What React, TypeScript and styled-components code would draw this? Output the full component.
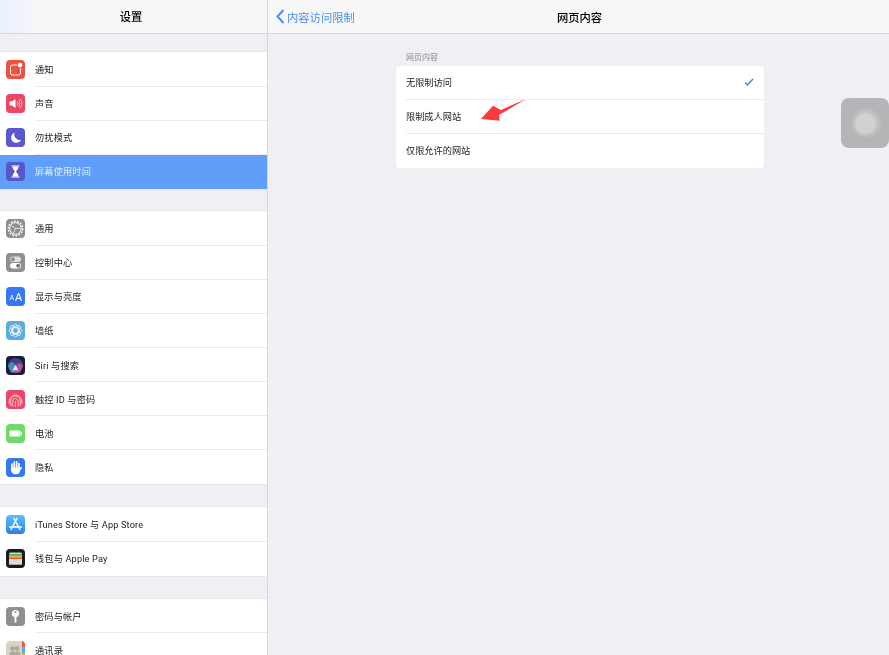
import React from "react";
import styled, { createGlobalStyle } from "styled-components";

const Global = createGlobalStyle`
  html, body { margin: 0; padding: 0; background: #efeff4; overflow: hidden; }
  body { font-family: Roboto, "Noto Sans CJK SC", sans-serif; }
`;
const Page = styled.div`display: flex; width: 889px; height: 655px; overflow: hidden; position: relative; background: #efeff4; filter: blur(.25px);`;
const Sidebar = styled.aside`width: 268px; box-sizing: border-box; flex: none; height: 655px; overflow: hidden; border-right: 1px solid #d9d9dc; background: #efeff4;`;
const NavBar = styled.header`height: 34px; box-sizing: border-box; border-bottom: 1px solid #d8d8da; background: #f7f7f8; display: flex; align-items: center; justify-content: center; position: relative; font-size: 11.3px; color: #000; font-weight: 500; flex: none; padding-left: 2px;`;
const SideNav = styled(NavBar)`padding: 0 5px 1px 0; background: linear-gradient(90deg, #e8f1fc 0, #eef4fb 18px, #f7f7f8 42px);`;
const Group = styled.div<{ $top: number }>`margin-top: ${p => p.$top}px; background: #fff; box-shadow: 0 -1px 0 #e6e6e8, 0 1px 0 #e6e6e8;`;
const Row = styled.div<{ $active?: boolean }>`height: 34.14px; box-sizing: border-box; display: flex; align-items: center; padding-left: 6px; gap: 10px; font-size: 9.2px; letter-spacing: .15px; background: ${p => p.$active ? "#5f9ffb" : "#fff"}; color: ${p => p.$active ? "#dceaff" : "#222"}; position: relative;
  &:not(:last-child)::after { content: ""; display: ${p => p.$active ? "none" : "block"}; position: absolute; left: 35px; right: 0; bottom: 0; height: 1px; background: #ebebed; }
`;
const RowLabel = styled.span`padding-bottom: 1px;`;
const IconTile = styled.span<{ $bg: string }>`width: 19px; height: 19px; border-radius: 4px; background: ${p => p.$bg}; flex: none; display: block; overflow: hidden;`;
const Glyph = styled.svg`width: 19px; height: 19px; display: block;`;
const Main = styled.main`flex: 1; min-width: 0; display: flex; flex-direction: column;`;
const BackLink = styled.div`position: absolute; left: 8px; top: 0; height: 33px; display: flex; align-items: center; gap: 2px; font-size: 11.3px; font-weight: 400; color: #4d8df6;`;
const Content = styled.div`padding: 17.5px 125px 0 128px; position: relative;`;
const SectionLabel = styled.div`font-size: 8px; color: #8a8a8e; padding-left: 10px; height: 14px; line-height: 11px;`;
const Card = styled.div`background: #fff; border-radius: 4px; overflow: hidden;`;
const Option = styled.div`height: 34px; box-sizing: border-box; display: flex; align-items: center; justify-content: space-between; margin-left: 10px; padding: 0 10px 1px 0; font-size: 9.2px; color: #222; border-bottom: 1px solid #ebebed; &:last-child { border-bottom: 0; }`;
const Arrow = styled.svg`position: absolute; left: 481px; top: 98px; width: 47px; height: 24px;`;
const AssistiveTouch = styled.div`position: absolute; left: 841px; top: 98px; width: 48px; height: 50px; box-sizing: border-box; padding-left: 1px; border-radius: 8px; background: #b5b5b8; display: flex; align-items: center; justify-content: center;`;
const Ring = styled.div`width: 30px; height: 30px; border-radius: 50%; background: #bbbbbe; display: flex; align-items: center; justify-content: center;`;
const RingInner = styled.div`width: 26px; height: 26px; border-radius: 50%; background: #c2c2c4; display: flex; align-items: center; justify-content: center;`;
const Dot = styled.div`width: 21px; height: 21px; border-radius: 50%; background: #d1d1d2;`;

const W = "#fff";
const icons: Record<string, [string, React.ReactNode]> = {
  bell: ["#ee5140", <><rect x="4.5" y="5" width="10" height="10" rx="2" fill="none" stroke={W} strokeWidth="1"/><circle cx="14" cy="5" r="3.2" fill="#ee5140"/><circle cx="14" cy="5" r="2.3" fill={W}/></>],
  sound: ["#ee4562", <><path d="M3.5 7.5h2.5L9.5 5v9L6 11.5H3.5z" fill={W}/><path d="M11 7.5a3 3 0 010 4M12.5 6a5 5 0 010 7M14 4.8a6.5 6.5 0 010 9.4" fill="none" stroke={W} strokeWidth=".7"/></>],
  moon: ["#5a58cf", <path d="M8.5 4.5a5.3 5.3 0 106.5 7.5A5.8 5.8 0 018.5 4.5z" fill={W}/>],
  hour: ["#5856c9", <><path d="M5.5 4h8M5.5 15h8" stroke={W} strokeWidth="1.2"/><path d="M6.5 4.5h6c0 3-2.3 3.7-2.3 5s2.3 2 2.3 5h-6c0-3 2.3-3.7 2.3-5s-2.3-2-2.3-5z" fill={W}/></>],
  gear: ["#8e8e93", <><circle cx="9.5" cy="9.5" r="7.2" fill="none" stroke={W} strokeWidth="1.4" strokeDasharray="1.8 1.4"/><circle cx="9.5" cy="9.5" r="5.8" fill="none" stroke={W} strokeWidth="1"/><path d="M9.5 9.5L5.5 6.8M9.5 9.5h5M9.5 9.5L7.3 14.5" stroke={W} strokeWidth=".7"/></>],
  ctrl: ["#8e8e93", <><rect x="4" y="3.5" width="11" height="5.5" rx="2.75" fill="#ddd"/><circle cx="6.8" cy="6.2" r="2" fill="#8e8e93"/><rect x="4" y="10" width="11" height="5.5" rx="2.75" fill={W}/><circle cx="12.2" cy="12.8" r="2" fill="#777"/></>],
  aa: ["#3478f6", <><text x="3.5" y="12.5" fontSize="7" fill={W} fontFamily="Liberation Sans">A</text><text x="9" y="13.5" fontSize="10.5" fill={W} fontFamily="Liberation Sans">A</text></>],
  wall: ["#5aaede", <g fill="none" stroke={W} strokeWidth=".7"><ellipse cx="9.5" cy="9.5" rx="2.8" ry="6.5"/><ellipse cx="9.5" cy="9.5" rx="2.8" ry="6.5" transform="rotate(45 9.5 9.5)"/><ellipse cx="9.5" cy="9.5" rx="2.8" ry="6.5" transform="rotate(90 9.5 9.5)"/><ellipse cx="9.5" cy="9.5" rx="2.8" ry="6.5" transform="rotate(135 9.5 9.5)"/><circle cx="9.5" cy="9.5" r="3.5"/></g>],
  siri: ["#1a1a3c", <><circle cx="9.5" cy="9.5" r="7.5" fill="#44407e"/><path d="M2 10Q6 3 9.5 9L12 16.5H5z" fill="#3fa2c9" opacity=".85"/><path d="M17 10Q13 4 9.5 10L7 16.5h7z" fill="#c94f9f" opacity=".85"/><path d="M6.5 15Q8.5 10.5 9.5 9 10.5 10.5 12.5 15 9.5 13 6.5 15z" fill="#eef2ff"/></>],
  touch: ["#ee4562", <g fill="none" stroke={W} strokeWidth=".9" opacity=".8"><path d="M3 14c-.5-12 13.5-12 13 0"/><path d="M5 16c-.8-5-.5-10 4.5-10s5.300 5 4.500 10"/><path d="M7 16.5c-.5-4-.5-8 2.500-8s3 4 2.500 8"/><path d="M9.5 11v6"/></g>],
  batt: ["#6fd96a", <><rect x="3.5" y="6.5" width="11" height="6" rx="1.2" fill={W}/><rect x="15" y="8.2" width="1" height="2.6" fill={W}/></>],
  hand: ["#3478f6", <><g stroke={W} strokeWidth="1.7" strokeLinecap="round"><path d="M6 6v6M8.3 4v7M10.7 3.8v7M13 5.5v7M13.2 12.5l2-2.8"/></g><path d="M5.2 9.5h8.600v3.500c0 1.800-1.200 3.200-3 3.200H9c-1.700 0-2.700-.7-3.800-3.200z" fill={W}/></>],
  store: ["linear-gradient(180deg,#5cc0f8,#2b7df0)", <g stroke={W} strokeWidth="1.5" strokeLinecap="round"><path d="M8 3.5l6 11M11 3.5l-6 11M3.5 12h12"/></g>],
  wallet: ["#1c1c1e", <><rect x="3" y="3.5" width="13" height="12" rx="1.5" fill="#d8d4c8"/><rect x="3" y="5" width="13" height="1.8" fill="#5aa76a"/><rect x="3" y="6.8" width="13" height="1.7" fill="#e0b23e"/><rect x="3" y="8.5" width="13" height="1.7" fill="#d9604f"/><path d="M3 10.2h4.500a2 2 0 004 0H16v5.300H3z" fill="#e0dccf"/></>],
  key: ["#8e8e93", <><circle cx="9.5" cy="6.5" r="3.6" fill={W}/><circle cx="9.5" cy="5" r="1" fill="#8e8e93"/><path d="M8.5 9h2v2l-.5.500.5.500v1l-.5.500.5.500v.800l-1 1.200-1-1.200z" fill={W}/></>],
  book: ["#d6d3c4", <><rect x="16" y="0" width="3" height="6.5" fill="#e2574c"/><rect x="16" y="6.5" width="3" height="6" fill="#5aaede"/><rect x="16" y="12.5" width="3" height="6.5" fill="#f2a33a"/><g fill="#aaa69a"><circle cx="6.5" cy="7.5" r="2.3"/><circle cx="11" cy="7.5" r="2.3"/><path d="M3.5 14c0-5 6-5 6 0zM8.500 14c0-5 6-5 6 0z"/></g></>],
};

function Icon({ name }: { name: string }) {
  const [bg, g] = icons[name];
  return <IconTile $bg={bg}><Glyph viewBox="0 0 19 19">{g}</Glyph></IconTile>;
}

const groups: { top: number; rows: [string, string, boolean?][] }[] = [
  { top: 18.4, rows: [["bell", "通知"], ["sound", "声音"], ["moon", "勿扰模式"], ["hour", "屏幕使用时间", true]] },
  { top: 22.6, rows: [["gear", "通用"], ["ctrl", "控制中心"], ["aa", "显示与亮度"], ["wall", "墙纸"], ["siri", "Siri 与搜索"], ["touch", "触控 ID 与密码"], ["batt", "电池"], ["hand", "隐私"]] },
  { top: 23, rows: [["store", "iTunes Store 与 App Store"], ["wallet", "钱包与 Apple Pay"]] },
  { top: 23.5, rows: [["key", "密码与帐户"], ["book", "通讯录"]] },
];

export default function App() {
  return (
    <Page>
      <Global />
      <Sidebar>
        <SideNav>设置</SideNav>
        {groups.map((g, i) => (
          <Group key={i} $top={g.top}>
            {g.rows.map(([ic, label, active]) => (
              <Row key={label} $active={active}><Icon name={ic} /><RowLabel>{label}</RowLabel></Row>
            ))}
          </Group>
        ))}
      </Sidebar>
      <Main>
        <NavBar>
          <BackLink>
            <svg width="9" height="15" viewBox="0 0 9 15"><path d="M7.5 1L1.5 7.5 7.5 14" fill="none" stroke="#4d8df6" strokeWidth="2"/></svg>
            内容访问限制
          </BackLink>
          网页内容
        </NavBar>
        <Content>
          <SectionLabel>网页内容</SectionLabel>
          <Card>
            <Option>无限制访问
              <svg width="10" height="8" viewBox="0 0 10 8"><path d="M1 4.5L3.5 7 9 1" fill="none" stroke="#3f80ee" strokeWidth="1.3"/></svg>
            </Option>
            <Option>限制成人网站</Option>
            <Option>仅限允许的网站</Option>
          </Card>
        </Content>
      </Main>
      <Arrow viewBox="0 0 47 24"><path d="M45 1L20 12 12 7.7 0 21 18.7 22.7 18 17z" fill="#fa3a40"/></Arrow>
      <AssistiveTouch><Ring><RingInner><Dot /></RingInner></Ring></AssistiveTouch>
    </Page>
  );
}
